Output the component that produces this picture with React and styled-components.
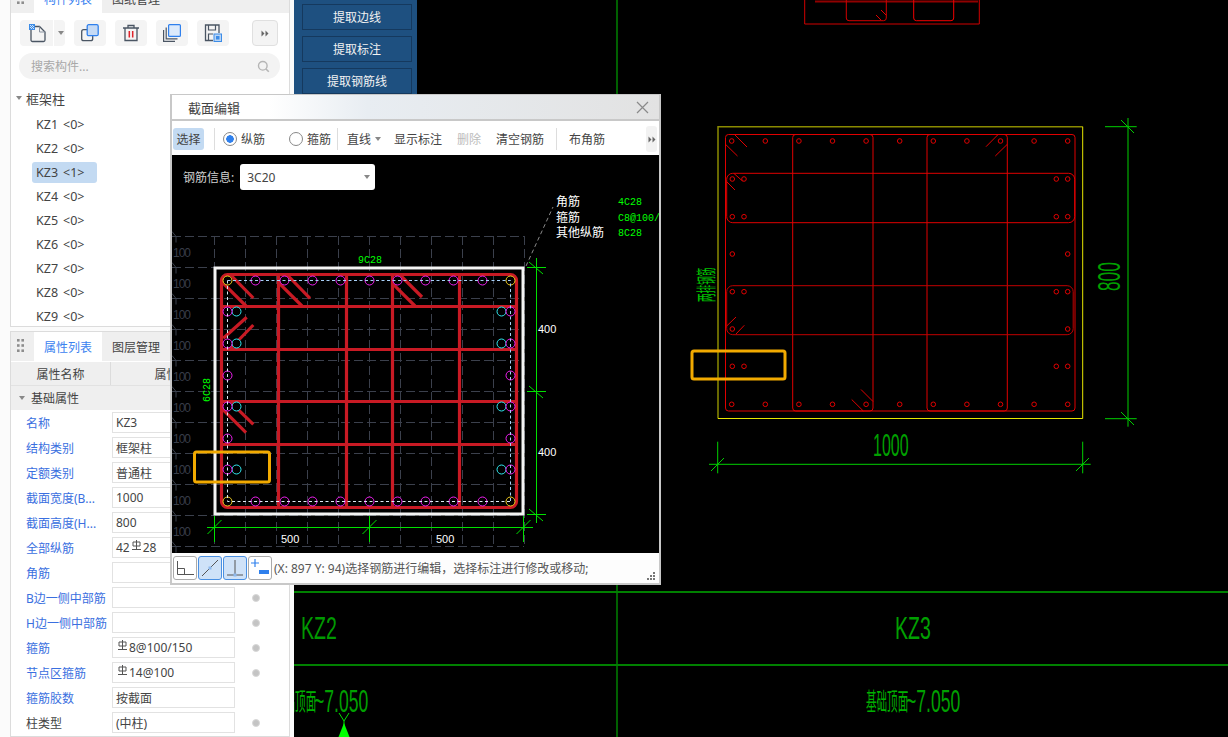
import React from "react";
import styled, { createGlobalStyle } from "styled-components";

const UI_FONT = `"Noto Sans", "Noto Sans CJK SC", sans-serif`;

const GlobalStyle = createGlobalStyle`
    html, body {
        margin: 0;
        padding: 0;
        background: #000;
    }
    * {
        box-sizing: border-box;
    }
`;

// data for the left side
const members = [
    { name: "KZ1", count: 0 },
    { name: "KZ2", count: 0 },
    { name: "KZ3", count: 1, selected: true },
    { name: "KZ4", count: 0 },
    { name: "KZ5", count: 0 },
    { name: "KZ6", count: 0 },
    { name: "KZ7", count: 0 },
    { name: "KZ8", count: 0 },
    { name: "KZ9", count: 0 },
];

const props = [
    { label: "名称", value: "KZ3" },
    { label: "结构类别", value: "框架柱" },
    { label: "定额类别", value: "普通柱" },
    { label: "截面宽度(B...", value: "1000", dot: true },
    { label: "截面高度(H...", value: "800", dot: true },
    { label: "全部纵筋", value: ["42", "28"], dot: true },
    { label: "角筋", value: "", dot: true },
    { label: "B边一侧中部筋", value: "", dot: true },
    { label: "H边一侧中部筋", value: "", dot: true },
    { label: "箍筋", value: ["", "8@100/150"], dot: true },
    { label: "节点区箍筋", value: ["", "14@100"], dot: true },
    { label: "箍筋胶数", value: "按截面" },
    { label: "柱类型", value: "(中柱)", dot: true, plain: true },
];

const extractButtons = ["提取边线", "提取标注", "提取钢筋线"];

// ---- small icons ----
function BarSymbol() {
    return (
        <SymbolSvg width="11" height="11" viewBox="0 0 11 11">
            <path d="M2 2h7v4H2zM5.5 0v9M1 9.5h9" fill="none" stroke="#555" strokeWidth="1" />
        </SymbolSvg>
    );
}

function NewIcon() {
    return (
        <svg width="20" height="20" viewBox="0 0 20 20">
            <path d="M4 3.5h8.5L18 9v8a1.5 1.5 0 0 1-1.5 1.5h-11A1.5 1.5 0 0 1 4 17z" fill="none" stroke="#4a5563" strokeWidth="1.3" />
            <path d="M12.5 3.5V9H18" fill="none" stroke="#8a93a0" strokeWidth="1" />
            <rect x="2" y="1" width="6" height="6" fill="#3c8ce7" />
            <path d="M3 2h1v1H3zM5 2h1v1H5zM4 3h1v1H4zM6 3h1v1H6zM3 4h1v1H3zM5 4h1v1H5zM4 5h1v1H4zM6 5h1v1H6z" fill="#cfe3fa" />
        </svg>
    );
}

function CopyIcon() {
    return (
        <svg width="20" height="20" viewBox="0 0 20 20">
            <rect x="1.7" y="6.7" width="11" height="11" rx="2" fill="none" stroke="#4a5563" strokeWidth="1.3" />
            <rect x="7.2" y="1.7" width="11" height="11" rx="1.5" fill="#c5daf5" stroke="#2f80ed" strokeWidth="1.3" />
        </svg>
    );
}

function TrashIcon() {
    return (
        <svg width="20" height="20" viewBox="0 0 20 20">
            <path d="M2 5h16M7 5V2.5h6V5M4 5v12.5h12V5" fill="none" stroke="#4a5563" strokeWidth="1.3" />
            <path d="M8.3 8v6.5M11.7 8v6.5" stroke="#e0242c" strokeWidth="1.5" />
        </svg>
    );
}

function StackIcon() {
    return (
        <svg width="20" height="20" viewBox="0 0 20 20">
            <path d="M1.6 7v11.4H13M4.2 4.5v11.3h11.3" fill="none" stroke="#4a5563" strokeWidth="1.2" />
            <rect x="6.6" y="1.6" width="11.8" height="11.8" rx="1" fill="#dceafb" stroke="#2f80ed" strokeWidth="1.2" />
        </svg>
    );
}

function SaveIcon() {
    return (
        <svg width="20" height="20" viewBox="0 0 20 20">
            <path d="M16 10V2H2.5v15.5H10" fill="none" stroke="#4a5563" strokeWidth="1.3" />
            <path d="M5.5 2v5h7V2M5.5 17.5V11H10" fill="none" stroke="#4a5563" strokeWidth="1.2" />
            <rect x="11" y="11" width="7.5" height="7.5" fill="#b8d4f5" stroke="#3c8ce7" strokeWidth="1" />
            <rect x="13" y="13" width="3.5" height="3.5" fill="#3c8ce7" />
        </svg>
    );
}

function MoreArrows() {
    return (
        <svg width="8" height="7" viewBox="0 0 8 7">
            <path d="M0.5 0.5L3.5 3.5L0.5 6.5zM4.5 0.5L7.5 3.5L4.5 6.5z" fill="#666" />
        </svg>
    );
}

function SearchIcon() {
    return (
        <svg width="13" height="13" viewBox="0 0 13 13">
            <circle cx="5.8" cy="5.8" r="4.3" fill="none" stroke="#b5b5b5" strokeWidth="1.4" />
            <path d="M9 9l2.8 2.8" stroke="#b5b5b5" strokeWidth="1.6" />
        </svg>
    );
}

function GripDots() {
    return (
        <svg width="7" height="15" viewBox="0 0 7 15">
            {[0, 5.2, 10.4].map((y) => (
                <g key={y} fill="#8d8d8d">
                    <rect x="0" y={y} width="2.6" height="2.6" />
                    <rect x="4.4" y={y} width="2.6" height="2.6" />
                </g>
            ))}
        </svg>
    );
}

// ---- section drawing inside the dialog ----
// coordinates here are page coordinates, the black area starts at page (172, 155)
const ox = 172;
const oy = 155;

const gridX = Array.from({ length: 11 }, (_, i) => 214.5 + i * 31);
const gridY = Array.from({ length: 11 }, (_, i) => 236.5 + i * 31);
const sideTopX = [255.5, 284.5, 312.5, 340.5, 369.5, 397.5, 425.5, 453.5, 482.5];
const sideLeftY = [311.5, 343.5, 375.5, 406.5, 438.5, 469.5];
const cyanY = [311.5, 343.5, 406.5, 469.5];
const innerVX = [278.5, 346.5, 392.5, 459.5];
const innerHY = [306.5, 349.5, 401.5, 444.5];
const hooks = [
    [230.7, 275, 253.3, 298],
    [223.3, 283.3, 246, 306],
    [287.3, 275, 310, 298.3],
    [279.3, 283.3, 302, 306],
    [400, 275, 422, 297],
    [393.3, 284.3, 415, 306],
    [223.3, 338.3, 246.7, 317.3],
    [230, 349, 253.3, 325],
    [230, 401.7, 253.3, 424.3],
    [222.7, 409.3, 246, 432.7],
];

function Tick({ x, y }) {
    return <path d={`M${x - 7} ${y + 7}L${x + 7} ${y - 7}`} stroke="#00e000" strokeWidth="1" />;
}

function SectionDrawing() {
    return (
        <SectionSvg width="487" height="398" viewBox={`${ox} ${oy} 487 398`}>
            {/* dashed helper grid */}
            <g stroke="#3b404c" strokeWidth="1" strokeDasharray="9 4">
                {gridX.map((x) => (
                    <line key={x} x1={x} y1="236" x2={x} y2="546" />
                ))}
                {gridY.map((y) => (
                    <line key={y} x1="172" y1={y} x2="524" y2={y} />
                ))}
            </g>
            <path
                d={gridY.map((y) => `M172 ${y - 5}l4 5v6`).join("")}
                fill="none"
                stroke="#3b404c"
            />
            <g fill="#383d49" fontFamily='"Liberation Sans", sans-serif' fontSize="12">
                {gridY.slice(0, 10).map((y) => (
                    <text key={y} x="173" y={y + 20} textLength="18">100</text>
                ))}
            </g>

            {/* leader + info */}
            <path d="M526 266L553 207" stroke="#8a8a8a" strokeDasharray="4 3" fill="none" />
            <g fill="#fff" fontFamily='"Noto Sans CJK SC", sans-serif' fontSize="12">
                <text x="556" y="206">角筋</text>
                <text x="556" y="222">箍筋</text>
                <text x="556" y="237">其他纵筋</text>
            </g>
            <g fill="#00ff00" fontFamily='"Liberation Mono", monospace' fontSize="10">
                <text x="618" y="205">4C28</text>
                <text x="618" y="221">C8@100/150</text>
                <text x="618" y="236">8C28</text>
                <text x="358" y="263">9C28</text>
                <text transform="translate(210 402) rotate(-90)">6C28</text>
            </g>

            {/* dimensions */}
            <g stroke="#00e000" strokeWidth="1" fill="none">
                <path d="M536.5 258V523M527 267.5H546M527 391.5H546M527 514.5H546" />
                <path d="M207 527.5H533M214.5 516V542M369.5 516V542M523.5 516V542" />
            </g>
            <Tick x={214.5} y={527} />
            <Tick x={369.5} y={527} />
            <Tick x={523.5} y={527} />
            <path d="M529 262l14 12M529 386l14 12M529 509l14 12" stroke="#00e000" fill="none" />
            <g fill="#fff" fontFamily='"Liberation Sans", sans-serif' fontSize="11">
                <text x="538" y="333">400</text>
                <text x="538" y="456">400</text>
                <text x="281" y="543">500</text>
                <text x="436" y="543">500</text>
            </g>

            {/* column outline */}
            <rect x="215" y="268" width="308" height="246" fill="none" stroke="#f4f4f4" strokeWidth="3" />

            {/* stirrups */}
            <g stroke="#c81a24" strokeWidth="3.2" fill="none">
                <rect x="221.5" y="274.5" width="295" height="233" rx="6" />
                {innerVX.map((x) => (
                    <line key={x} x1={x} y1="274" x2={x} y2="507" />
                ))}
                {innerHY.map((y) => (
                    <line key={y} x1="222" y1={y} x2="516" y2={y} />
                ))}
                {hooks.map((h, i) => (
                    <line key={i} x1={h[0]} y1={h[1]} x2={h[2]} y2={h[3]} />
                ))}
            </g>

            {/* rebars */}
            <g fill="#000" strokeWidth="1">
                {sideTopX.map((x) => (
                    <g key={x} stroke="#f020f0">
                        <circle cx={x} cy="280.5" r="4.5" />
                        <circle cx={x} cy="501.5" r="4.5" />
                    </g>
                ))}
                {cyanY.map((y) => (
                    <g key={y} stroke="#30e8f0">
                        <circle cx="236.5" cy={y} r="4.5" />
                        <circle cx="501.5" cy={y} r="4.5" />
                    </g>
                ))}
                {sideLeftY.map((y) => (
                    <g key={y} stroke="#f020f0">
                        <circle cx="227.5" cy={y} r="4.5" />
                        <circle cx="510.5" cy={y} r="4.5" />
                    </g>
                ))}
                {[
                    [227.5, 280.5],
                    [510.5, 280.5],
                    [227.5, 501.5],
                    [510.5, 501.5],
                ].map(([x, y]) => (
                    <circle key={x + "-" + y} cx={x} cy={y} r="4.5" stroke="#f5d020" />
                ))}
            </g>

            {/* rebar layout line */}
            <path d="M227.5 280.5H510.5V501.5" fill="none" stroke="#a8d0f8" strokeDasharray="3 2.5" />
            <path d="M227.5 280.5V501.5H510.5" fill="none" stroke="#dfeaf5" strokeDasharray="3 2.5" />

            {/* annotation box */}
            <rect x="194.5" y="452" width="75" height="30" rx="2" fill="none" stroke="#f2aa00" strokeWidth="3" />
        </SectionSvg>
    );
}

// ---- background CAD drawing ----
// viewBox starts at page x=294 so the numbers read as screen coordinates
const planTopX = Array.from({ length: 11 }, (_, i) => 731.7 + i * 33.6);
const planRows = [
    { y: 179, inner: true },
    { y: 216.7, inner: true },
    { y: 254, inner: false },
    { y: 291.7, inner: true },
    { y: 329, inner: false },
    { y: 366.3, inner: true },
];
const planHooks = [
    "M735 135l12 12",
    "M725.7 144.5l11.8 11.5",
    "M986 146.7l11.6-11.7",
    "M995.3 156l12-11.7",
    "M861 389.5l12 12",
    "M851.7 399.5l11.6 11.5",
    "M734 173.5l8.5 7.5",
    "M726.7 181.7l8.3 8.3",
    "M726.7 326l9.3-9",
    "M736 334l8.3-8.7",
];

function CadLabel({ x, y, sx, size, rotate, color, children }) {
    const t = `translate(${x} ${y})${rotate ? ` rotate(${rotate})` : ""} scale(${sx} 1)`;
    return (
        <text transform={t} fontSize={size} fill={color} fontFamily='"Liberation Sans", "Noto Sans CJK SC", sans-serif'>
            {children}
        </text>
    );
}

function CadDrawing() {
    return (
        <CadSvg width="934" height="737" viewBox="294 0 934 737">
            {/* axis lines */}
            <g fill="none">
                <line x1="617" y1="0" x2="617" y2="737" stroke="#00c000" strokeWidth="1" />
                <line x1="294" y1="592" x2="1228" y2="592" stroke="#008000" strokeWidth="2" />
                <line x1="294" y1="665" x2="1228" y2="665" stroke="#008000" strokeWidth="2" />
            </g>

            {/* part of the section above */}
            <g fill="none" stroke="#b00000" strokeWidth="1">
                <path d="M804.7 0V24H979.3V0" stroke="#d00000" />
                <path d="M815 1.5H978" strokeWidth="2" stroke="#900000" />
                <path d="M846.3 0V18a2.7 2.7 0 0 0 2.7 2.7H883.6a2.7 2.7 0 0 0 2.7-2.7V0" stroke="#d00000" />
                <path d="M913.7 0V18a2.7 2.7 0 0 0 2.7 2.7H951a2.7 2.7 0 0 0 2.7-2.7V0" stroke="#f00000" />
                <path d="M881 10l5.3 5.3M876 15l5 5" stroke="#e00000" />
            </g>

            {/* plan section */}
            <path d="M718 418.5V126.7H1082.7" fill="none" stroke="#8a8a00" strokeWidth="1.5" />
            <path d="M1082.7 126.7V418.5H718" fill="none" stroke="#e8e800" strokeWidth="1" />
            <g fill="none" stroke="#e00000" strokeWidth="1">
                <rect x="725.5" y="134.5" width="349.5" height="276.5" rx="3" />
                <rect x="792.7" y="134.5" width="80.3" height="276.5" rx="3" />
                <rect x="927" y="134.5" width="80.3" height="276.5" rx="3" />
                <rect x="726.7" y="173.3" width="348" height="49.4" rx="6" />
                <rect x="726.7" y="285.7" width="346.5" height="49" rx="6" stroke="#c00000" />
                {planHooks.map((d) => (
                    <path key={d} d={d} />
                ))}
                {planTopX.map((x) => (
                    <g key={x}>
                        <circle cx={x} cy="141" r="2.3" />
                        <circle cx={x} cy="404.3" r="2.3" />
                    </g>
                ))}
                {planRows.map((row) => (
                    <g key={row.y}>
                        <circle cx="732.3" cy={row.y} r="2.3" />
                        <circle cx="1067.7" cy={row.y} r="2.3" />
                        {row.inner && <circle cx="744" cy={row.y} r="2.3" />}
                        {row.inner && <circle cx="1056.3" cy={row.y} r="2.3" />}
                    </g>
                ))}
            </g>

            {/* dimensions */}
            <g fill="none" stroke="#00d000" strokeWidth="1">
                <path d="M1128 118V426.7M1105 126.7H1136.7M1105 418.7H1136.7" />
                <path d="M1121 120l13 13M1121 412l13 13" />
                <path d="M709 464.3H1090.7M717.7 441.7V473.3M1082.7 441.7V473.3" />
                <path d="M711 471l13-13M1076 471l13-13" />
            </g>
            <CadLabel x={873} y={456} sx={0.5} size={32} color="#00a000">1000</CadLabel>
            <CadLabel x={1120} y={291} sx={0.54} size={32} rotate={-90} color="#00a000">800</CadLabel>
            <CadLabel x={714} y={302} sx={0.43} size={20} rotate={-90} color="#00c000">两排钢筋</CadLabel>

            {/* name labels */}
            <CadLabel x={301} y={639} sx={0.63} size={31} color="#009800">KZ2</CadLabel>
            <CadLabel x={895} y={639} sx={0.63} size={31} color="#00a000">KZ3</CadLabel>
            <CadLabel x={274} y={710} sx={0.44} size={24} color="#00b000">基础顶面</CadLabel>
            <CadLabel x={314} y={712} sx={0.55} size={32} color="#00a000">~7.050</CadLabel>
            <CadLabel x={866} y={710} sx={0.44} size={24} color="#00b000">基础顶面</CadLabel>
            <CadLabel x={906} y={712} sx={0.55} size={32} color="#00a000">~7.050</CadLabel>

            {/* ucs marker */}
            <path d="M339 713l5 8 5-8M344 721v4" fill="none" stroke="#00e000" strokeWidth="1" />
            <path d="M344 723L349.5 737H338.5z" fill="#00ff00" />

            {/* annotation box */}
            <rect x="692" y="351" width="93" height="28" rx="2" fill="none" stroke="#f2aa00" strokeWidth="3" />
        </CadSvg>
    );
}

function SectionDialog() {
    return (
        <Dialog>
            <TitleBar>
                <span>截面编辑</span>
                <svg width="13" height="13" viewBox="0 0 13 13">
                    <path d="M1 1l11 11M12 1L1 12" stroke="#8a8a8a" strokeWidth="1.2" />
                </svg>
            </TitleBar>
            <DialogToolbar>
                <ToolSelect>选择</ToolSelect>
                <ToolDivider $left={10} $right={8} />
                <RadioItem $width={66}>
                    <RadioMark $on />
                    纵筋
                </RadioItem>
                <RadioItem $width={48}>
                    <RadioMark />
                    箍筋
                </RadioItem>
                <ToolDivider $left={0} $right={7} />
                <LineDrop>
                    直线
                    <Caret />
                </LineDrop>
                <ToolLabel $width={48}>显示标注</ToolLabel>
                <ToolLabel $width={24} $disabled>删除</ToolLabel>
                <ToolLabel $width={48}>清空钢筋</ToolLabel>
                <ToolDivider $left={-3} $right={12} />
                <ToolLabel $width={36}>布角筋</ToolLabel>
                <ToolMore>
                    <MoreArrows />
                </ToolMore>
            </DialogToolbar>
            <DrawingArea>
                <SectionDrawing />
                <InfoRow>
                    钢筋信息:
                    <BarSelect>
                        3C20
                        <Caret />
                    </BarSelect>
                </InfoRow>
            </DrawingArea>
            <DialogFooter>
                <SnapButton>
                    <svg width="20" height="20" viewBox="0 0 20 20">
                        <path d="M2.5 3v13.5H19M2.5 10.5H9.5V16.5" fill="none" stroke="#555" strokeWidth="1" />
                    </svg>
                </SnapButton>
                <SnapButton $active>
                    <svg width="20" height="20" viewBox="0 0 20 20">
                        <path d="M2 18L18 2" stroke="#555" strokeWidth="1" />
                        <rect x="8.5" y="8.5" width="3" height="3" fill="#8db8ec" />
                    </svg>
                </SnapButton>
                <SnapButton $active>
                    <svg width="20" height="20" viewBox="0 0 20 20">
                        <path d="M10 2v15M2 17h16" stroke="#555" strokeWidth="1" />
                        <rect x="8.5" y="15.5" width="3" height="3" fill="#8db8ec" />
                    </svg>
                </SnapButton>
                <SnapButton>
                    <svg width="20" height="20" viewBox="0 0 20 20">
                        <path d="M5 1v8M1 5h8" stroke="#2f80ed" strokeWidth="1.2" />
                        <rect x="9" y="12" width="10" height="4" fill="#2f80ed" />
                    </svg>
                </SnapButton>
                <StatusText>(X: 897 Y: 94)选择钢筋进行编辑，选择标注进行修改或移动;</StatusText>
                <ResizeGrip>
                    <svg width="9" height="9" viewBox="0 0 9 9">
                        <path d="M6 0h2v2H6zM3 3h2v2H3zM6 3h2v2H6zM0 6h2v2H0zM3 6h2v2H3zM6 6h2v2H6z" fill="#777" />
                    </svg>
                </ResizeGrip>
            </DialogFooter>
        </Dialog>
    );
}

export default function App() {
    return (
        <Page>
            <GlobalStyle />
            <Sidebar>
                <MemberPanel>
                    <TabBar>
                        <GripHolder>
                            <GripDots />
                        </GripHolder>
                        <Tab $active>构件列表</Tab>
                        <Tab>图纸管理</Tab>
                    </TabBar>
                    <IconBar>
                        <SplitButton>
                            <NewIcon />
                            <SplitCaret>
                                <Caret />
                            </SplitCaret>
                        </SplitButton>
                        <IconButton><CopyIcon /></IconButton>
                        <IconButton><TrashIcon /></IconButton>
                        <IconButton><StackIcon /></IconButton>
                        <IconButton><SaveIcon /></IconButton>
                        <MoreButton><MoreArrows /></MoreButton>
                    </IconBar>
                    <SearchBox>
                        搜索构件...
                        <SearchIcon />
                    </SearchBox>
                    <TreeHead>
                        <Caret />
                        框架柱
                    </TreeHead>
                    {members.map((m) => (
                        <TreeItem key={m.name} $selected={m.selected}>
                            <span>{m.name}</span>
                            <span>&lt;{m.count}&gt;</span>
                        </TreeItem>
                    ))}
                </MemberPanel>
                <PropertyPanel>
                    <TabBar>
                        <GripHolder>
                            <GripDots />
                        </GripHolder>
                        <Tab $active>属性列表</Tab>
                        <Tab>图层管理</Tab>
                    </TabBar>
                    <TableHead>
                        <HeadCell $width={100}>属性名称</HeadCell>
                        <HeadCell $width={124}>属性值</HeadCell>
                    </TableHead>
                    <SectionRow>
                        <Caret />
                        基础属性
                    </SectionRow>
                    {props.map((p) => (
                        <PropRow key={p.label}>
                            <PropLabel $plain={p.plain}>{p.label}</PropLabel>
                            <PropInput>
                                {Array.isArray(p.value) ? (
                                    <>
                                        {p.value[0]}
                                        <BarSymbol />
                                        {p.value[1]}
                                    </>
                                ) : (
                                    p.value
                                )}
                            </PropInput>
                            {p.dot && <PropDot />}
                        </PropRow>
                    ))}
                </PropertyPanel>
            </Sidebar>
            <Canvas>
                <CadDrawing />
                <ExtractPanel>
                    {extractButtons.map((b) => (
                        <ExtractButton key={b}>{b}</ExtractButton>
                    ))}
                </ExtractPanel>
            </Canvas>
            <SectionDialog />
        </Page>
    );
}

// Styled components
const Page = styled.div`
    position: relative;
    display: flex;
    width: 1228px;
    height: 737px;
    overflow: hidden;
    background: #000;
    font-family: ${UI_FONT};
    font-size: 12px;
    color: #444;
`;

const Sidebar = styled.aside`
    width: 294px;
    flex: none;
    padding: 0 4px 0 10px;
    background: #fbfbfb;
    display: flex;
    flex-direction: column;
    gap: 4px;
`;

const MemberPanel = styled.section`
    margin-top: -17px;
    height: 344px;
    flex: none;
    background: #fff;
    border: 1px solid #dcdcdc;
    overflow: hidden;
`;

const PropertyPanel = styled.section`
    flex: 1;
    background: #fff;
    border: 1px solid #dcdcdc;
    overflow: hidden;
`;

const TabBar = styled.div`
    height: 29px;
    display: flex;
    align-items: stretch;
    background: #efefef;
`;

const GripHolder = styled.div`
    width: 23px;
    padding-left: 6px;
    display: flex;
    align-items: center;
`;

const Tab = styled.div`
    width: 68px;
    display: flex;
    align-items: center;
    justify-content: center;
    font-size: 12px;
    background: ${(p) => (p.$active ? "#fff" : "transparent")};
    color: ${(p) => (p.$active ? "#3b82f0" : "#444")};
`;

const IconBar = styled.div`
    display: flex;
    padding: 7px 0 0 9px;
    gap: 9px;
`;

const IconButton = styled.div`
    width: 32px;
    height: 26px;
    display: flex;
    align-items: center;
    justify-content: center;
    border-radius: 4px;
    background: #f4f4f4;
`;

const SplitButton = styled(IconButton)`
    width: 45px;
    justify-content: flex-start;
    padding-left: 7px;
`;

const SplitCaret = styled.div`
    margin-left: 6px;
    padding-left: 4px;
    height: 26px;
    display: flex;
    align-items: center;
    border-left: 1px solid #fff;
`;

const MoreButton = styled(IconButton)`
    width: 26px;
    margin-left: 14px;
    border: 1px solid #e0e0e0;
`;

const SearchBox = styled.div`
    margin: 7px 9px 0 8px;
    height: 26px;
    padding: 0 10px 0 12px;
    display: flex;
    align-items: center;
    justify-content: space-between;
    border-radius: 13px;
    background: #f3f3f3;
    color: #a8a8a8;
`;

const Caret = styled.i`
    display: inline-block;
    width: 0;
    height: 0;
    flex: none;
    border-left: 3.5px solid transparent;
    border-right: 3.5px solid transparent;
    border-top: 4px solid #888;
`;

const TreeHead = styled.div`
    height: 24px;
    margin: 7px 0 4px;
    padding-left: 5px;
    display: flex;
    align-items: center;
    gap: 4px;
    font-size: 13px;
`;

const TreeItem = styled.div`
    height: 21px;
    margin: 0 0 3px 21px;
    width: 65px;
    padding-left: 4px;
    display: flex;
    align-items: center;
    gap: 5px;
    border-radius: 3px;
    font-size: 12.5px;
    background: ${(p) => (p.$selected ? "#c3daf2" : "transparent")};
`;

const TableHead = styled.div`
    display: flex;
    height: 25px;
    background: #efefef;
    border-top: 1px solid #fff;
    border-bottom: 1px solid #e2e2e2;
`;

const HeadCell = styled.div`
    width: ${(p) => p.$width}px;
    display: flex;
    align-items: center;
    justify-content: center;
    border-right: 1px solid #dcdcdc;
`;

const SectionRow = styled.div`
    height: 24px;
    padding-left: 8px;
    display: flex;
    align-items: center;
    gap: 6px;
    background: #efefef;
`;

const PropRow = styled.div`
    height: 25px;
    padding-left: 15px;
    display: flex;
    align-items: center;
`;

const PropLabel = styled.div`
    width: 86px;
    flex: none;
    white-space: nowrap;
    overflow: hidden;
    color: ${(p) => (p.$plain ? "#444" : "#3a6fe0")};
`;

const PropInput = styled.div`
    width: 123px;
    height: 21px;
    padding: 0 3px;
    flex: none;
    display: flex;
    align-items: center;
    border: 1px solid #e2e2e2;
    background: #fff;
`;

const SymbolSvg = styled.svg`
    margin: -5px 1px 0;
`;

const PropDot = styled.i`
    width: 8px;
    height: 8px;
    margin-left: 17px;
    border-radius: 50%;
    background: #c4c4c4;
    border: 1px solid #d8d8d8;
`;

const Canvas = styled.main`
    position: relative;
    flex: 1;
    background: #000;
`;

const CadSvg = styled.svg`
    display: block;
`;

const ExtractPanel = styled.div`
    position: absolute;
    left: 0;
    top: 0;
    width: 123px;
    height: 130px;
    padding: 4px 5px 0 8px;
    display: flex;
    flex-direction: column;
    gap: 6px;
    background: #1e5080;
`;

const ExtractButton = styled.div`
    height: 26px;
    flex: none;
    display: flex;
    align-items: center;
    justify-content: center;
    background: #1e5080;
    border: 1px solid #15395e;
    color: #f2f2f2;
    font-size: 12px;
`;

const Dialog = styled.div`
    position: absolute;
    left: 170px;
    top: 94px;
    width: 491px;
    height: 491px;
    display: flex;
    flex-direction: column;
    background: #fdfdfd;
    border: 2px solid #c8c8c8;
    border-top-width: 1px;
`;

const TitleBar = styled.div`
    height: 26px;
    flex: none;
    padding: 0 10px 0 16px;
    display: flex;
    align-items: center;
    justify-content: space-between;
    font-size: 13px;
    color: #444;
    background: linear-gradient(90deg, #fff 0%, #fff 20%, #e8edf2 40%, #e2e2e2 100%);
    border-bottom: 2px solid #c8c8c8;
`;

const DialogToolbar = styled.div`
    height: 34px;
    flex: none;
    padding: 2px 2px 0 1px;
    display: flex;
    align-items: center;
    background: #fff;
`;

const ToolSelect = styled.div`
    width: 31px;
    height: 22px;
    flex: none;
    display: flex;
    align-items: center;
    justify-content: center;
    border-radius: 3px;
    background: #c3daf2;
`;

const ToolDivider = styled.i`
    width: 1px;
    height: 22px;
    flex: none;
    margin: 0 ${(p) => p.$right}px 0 ${(p) => p.$left}px;
    background: #ddd;
`;

const RadioItem = styled.label`
    width: ${(p) => p.$width}px;
    flex: none;
    display: flex;
    align-items: center;
    gap: 4px;
`;

const RadioMark = styled.i`
    width: 14px;
    height: 14px;
    flex: none;
    border-radius: 50%;
    border: 1px solid #888;
    background: ${(p) =>
        p.$on ? "radial-gradient(circle, #2f80ed 0 3.5px, #fff 4px)" : "#fff"};
`;

const LineDrop = styled.div`
    width: 41px;
    height: 22px;
    flex: none;
    margin-right: 8px;
    padding-left: 2px;
    display: flex;
    align-items: center;
    gap: 4px;
`;

const ToolLabel = styled.div`
    width: ${(p) => p.$width}px;
    margin-right: 15px;
    flex: none;
    white-space: nowrap;
    color: ${(p) => (p.$disabled ? "#bcbcbc" : "#444")};
`;

const ToolMore = styled.div`
    margin-left: 26px;
    width: 11px;
    height: 26px;
    flex: none;
    display: flex;
    align-items: center;
    justify-content: center;
    border-radius: 3px;
    background: #f2f2f2;
`;

const DrawingArea = styled.div`
    position: relative;
    height: 398px;
    flex: none;
    overflow: hidden;
    background: #000;
`;

const SectionSvg = styled.svg`
    position: absolute;
    left: 0;
    top: 0;
`;

const InfoRow = styled.div`
    position: relative;
    padding: 9px 0 0 11px;
    display: flex;
    align-items: center;
    gap: 6px;
    color: #d0d0d0;
`;

const BarSelect = styled.div`
    width: 135px;
    height: 26px;
    padding: 0 5px 0 7px;
    display: flex;
    align-items: center;
    justify-content: space-between;
    border-radius: 3px;
    background: #fff;
    color: #444;
`;

const DialogFooter = styled.div`
    flex: 1;
    padding: 3px 0 0 1px;
    display: flex;
    gap: 1px;
    align-items: flex-start;
    position: relative;
`;

const SnapButton = styled.div`
    width: 24px;
    height: 24px;
    flex: none;
    display: flex;
    align-items: center;
    justify-content: center;
    border-radius: 3px;
    border: 1px solid ${(p) => (p.$active ? "#4a90e2" : "#aaa")};
    background: ${(p) => (p.$active ? "#cfe2f8" : "#fff")};
`;

const StatusText = styled.div`
    margin: 3px 0 0 1px;
    white-space: nowrap;
    color: #555;
`;

const ResizeGrip = styled.div`
    position: absolute;
    right: 3px;
    bottom: 2px;
    line-height: 0;
`;
